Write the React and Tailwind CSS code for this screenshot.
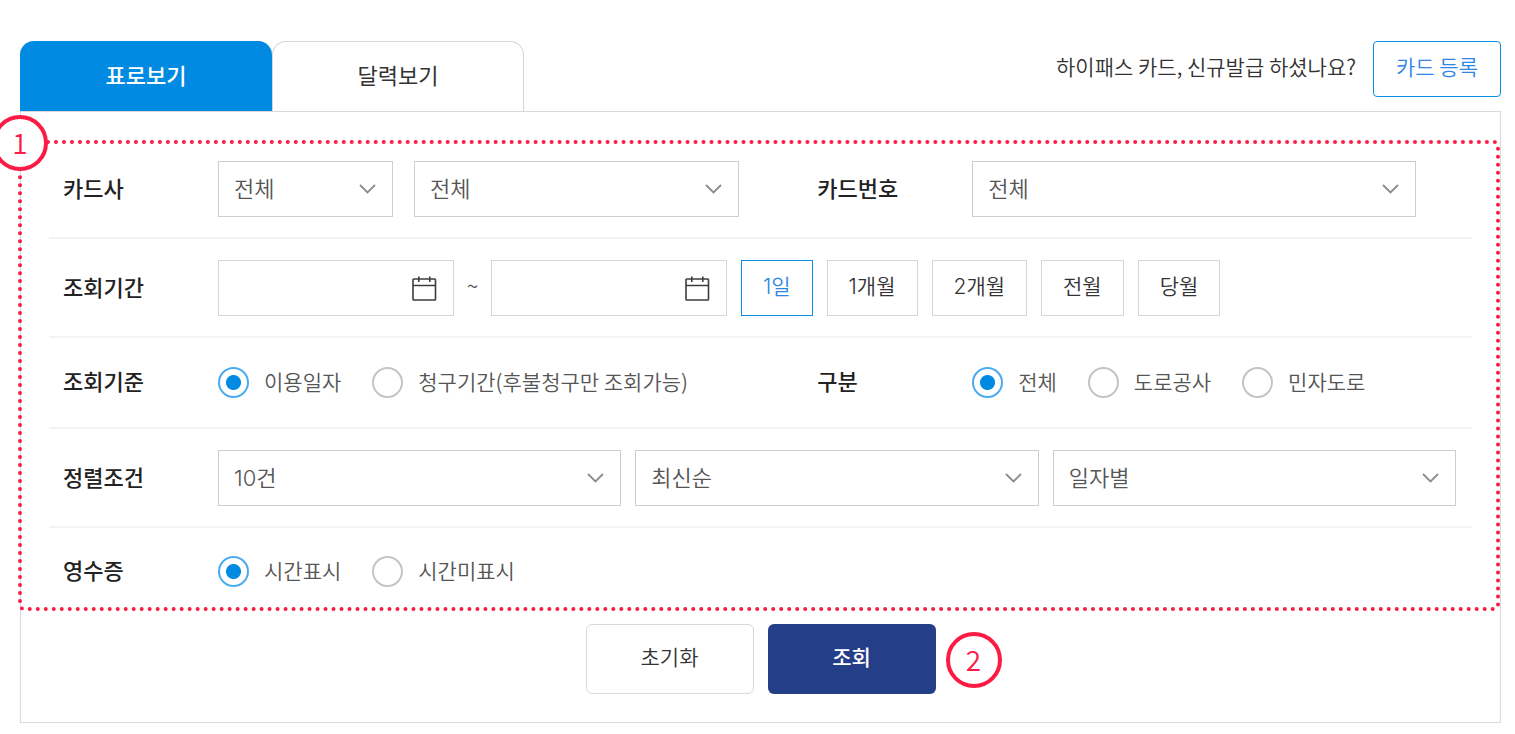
import React, { useState } from 'react';
import clsx from 'clsx';

const TABS = ['표로보기', '달력보기'];
const PERIODS = ['1일', '1개월', '2개월', '전월', '당월'];

const ChevronIcon = () => (
  <svg
    className="pointer-events-none absolute right-4 top-1/2 h-[18px] w-[18px] -translate-y-1/2"
    viewBox="0 0 18 18"
    fill="none"
    stroke="#8c8c8c"
    strokeWidth="1.8"
    aria-hidden="true"
  >
    <path d="M1 5 L8.5 12.5 L16 5" />
  </svg>
);

const CalendarIcon = () => (
  <svg
    className="pointer-events-none absolute right-4 top-1/2 h-[26px] w-[26px] -translate-y-1/2"
    viewBox="0 0 26 26"
    fill="none"
    stroke="#3c3c3c"
    strokeWidth="1.6"
    aria-hidden="true"
  >
    <rect x="1" y="4" width="22.5" height="21" rx="0.8" />
    <path d="M1 10.5 H23.5 M6.8 1.5 V7 M17.8 1.5 V7" />
  </svg>
);

const SelectBox = ({ id, label, options, className }) => (
  <div className={clsx('relative', className)}>
    <select
      id={id}
      aria-label={label}
      className="h-14 w-full appearance-none border border-[#cecece] bg-white pb-1 pl-[15px] pr-10 text-[22px] text-[#555555]"
    >
      {options.map((option) => (
        <option key={option}>{option}</option>
      ))}
    </select>
    <ChevronIcon />
  </div>
);

const DateBox = ({ id, label }) => (
  <div className="relative w-[236px]">
    <input
      id={id}
      type="text"
      aria-label={label}
      className="h-14 w-full border border-[#d6d6d6] bg-white pl-[15px] pr-12 text-[22px] text-[#555555]"
    />
    <CalendarIcon />
  </div>
);

const RadioGroup = ({ name, options }) => {
  const [value, setValue] = useState(options[0]);

  return (
    <div className="flex items-center gap-[31px]" role="radiogroup" aria-label={name}>
      {options.map((option) => (
        <label key={option} className="flex items-center gap-[15px] text-[21px] leading-[27px] text-[#555555]">
          <input
            type="radio"
            name={name}
            checked={value === option}
            onChange={() => setValue(option)}
            className="h-[31px] w-[31px] appearance-none rounded-full border-2 border-[#c4c4c4] bg-white checked:border-[#4aacef] checked:bg-[radial-gradient(circle,#008ae2_0,#008ae2_7px,transparent_8px)]"
          />
          <span className="pb-0.5">{option}</span>
        </label>
      ))}
    </div>
  );
};

const RowLabel = ({ htmlFor, children }) => (
  <label htmlFor={htmlFor} className="w-[155px] shrink-0 pb-1 text-[22px] font-medium leading-[27px] text-[#222222]">
    {children}
  </label>
);

const Badge = ({ children, className }) => (
  <span
    className={clsx(
      'flex h-14 w-14 items-center justify-center rounded-full border-4 border-[#fb1b44] bg-white pb-0.5 text-[28px] leading-none text-[#fb1b44]',
      className
    )}
  >
    {children}
  </span>
);

const App = () => {
  const [tab, setTab] = useState(TABS[0]);
  const [period, setPeriod] = useState(PERIODS[0]);

  return (
    <main className="min-h-screen bg-white pb-[11px] pl-5 pr-[14px] pt-[41px] font-['Noto_Sans_CJK_KR',sans-serif] font-[350]">
      {/* Tabs */}
      <header className="flex items-start justify-between">
        <div className="flex" role="tablist">
          {TABS.map((name) => (
            <button
              key={name}
              type="button"
              role="tab"
              aria-selected={tab === name}
              onClick={() => setTab(name)}
              className={clsx(
                'h-[70px] w-[252px] rounded-t-[14px] pb-1 text-[22px]',
                tab === name
                  ? 'bg-[#008ae2] font-medium text-white'
                  : 'border border-b-0 border-[#d6d6d6] bg-white font-normal text-[#333333]'
              )}
            >
              {name}
            </button>
          ))}
        </div>
        <div className="flex items-center gap-[17px]">
          <p className="pb-1 text-[21px] text-[#333333]">하이패스 카드, 신규발급 하셨나요?</p>
          <button
            type="button"
            className="h-14 rounded border border-[#0a8fe6] bg-white px-[22px] pb-1 text-[21px] text-[#2f86e4]"
          >
            카드 등록
          </button>
        </div>
      </header>

      <form className="border border-[#d9d9d9] pb-7 pt-7" onSubmit={(e) => e.preventDefault()}>
        <div className="relative px-7">
          {/* Card */}
          <div className="grid grid-cols-[53fr_47fr] border-b-2 border-[#f3f3f3] pb-5 pt-[21px]">
            <div className="flex items-center pl-[14px] pr-16">
              <RowLabel htmlFor="company">카드사</RowLabel>
              <div className="flex flex-1 gap-[21px]">
                <SelectBox id="company" options={['전체']} className="w-[175px]" />
                <SelectBox label="카드 종류" options={['전체']} className="flex-1" />
              </div>
            </div>
            <div className="flex items-center pl-[14px] pr-14">
              <RowLabel htmlFor="number">카드번호</RowLabel>
              <SelectBox id="number" options={['전체']} className="flex-1" />
            </div>
          </div>

          {/* Period */}
          <div className="flex items-center border-b-2 border-[#f3f3f3] pb-5 pl-[14px] pt-[21px]">
            <RowLabel htmlFor="start">조회기간</RowLabel>
            <div className="flex items-center gap-[14px]">
              <div className="flex items-center">
                <DateBox id="start" label="시작일" />
                <span className="w-[37px] pb-1 text-center text-[21px] text-[#555555]">~</span>
                <DateBox label="종료일" />
              </div>
              {PERIODS.map((name) => (
                <button
                  key={name}
                  type="button"
                  onClick={() => setPeriod(name)}
                  className={clsx(
                    "h-14 border bg-white px-[21px] pb-0.5 font-['Inter','Noto_Sans_CJK_KR',sans-serif] text-[21px]",
                    period === name ? 'border-[#0a8fe6] text-[#2f86e4]' : 'border-[#d6d6d6] text-[#333333]'
                  )}
                >
                  {name}
                </button>
              ))}
            </div>
          </div>

          {/* Criteria */}
          <div className="grid grid-cols-[53fr_47fr] border-b-2 border-[#f3f3f3] py-[29px]">
            <div className="flex items-center pl-[14px]">
              <RowLabel>조회기준</RowLabel>
              <RadioGroup name="조회기준" options={['이용일자', '청구기간(후불청구만 조회가능)']} />
            </div>
            <div className="flex items-center pl-[14px]">
              <RowLabel>구분</RowLabel>
              <RadioGroup name="구분" options={['전체', '도로공사', '민자도로']} />
            </div>
          </div>

          {/* Sort */}
          <div className="flex items-center border-b-2 border-[#f3f3f3] pb-5 pl-[14px] pr-4 pt-[21px]">
            <RowLabel htmlFor="count">정렬조건</RowLabel>
            <div className="flex flex-1 gap-[14px]">
              <SelectBox
                id="count"
                options={['10건']}
                className="flex-1 font-['Inter','Noto_Sans_CJK_KR',sans-serif] [&>select]:pb-0"
              />
              <SelectBox label="정렬 순서" options={['최신순']} className="flex-1" />
              <SelectBox label="정렬 단위" options={['일자별']} className="flex-1" />
            </div>
          </div>

          {/* Receipt */}
          <div className="flex items-center pb-6 pl-[14px] pt-7">
            <RowLabel>영수증</RowLabel>
            <RadioGroup name="영수증" options={['시간표시', '시간미표시']} />
          </div>

          {/* Step 1 outline */}
          <div className="pointer-events-none absolute -left-[3px] bottom-0 right-0 top-0 rounded-md border-4 border-dotted border-[#fb1b44]" />
          <Badge className="absolute -left-[29px] -top-[25px]">1</Badge>
        </div>

        <div className="mt-[13px] flex justify-center gap-[14px]">
          <button
            type="button"
            className="h-[70px] w-[168px] rounded-md border border-[#d9d9d9] bg-white pb-1 text-[21px] text-[#333333]"
          >
            초기화
          </button>
          <div className="relative">
            <button
              type="submit"
              className="h-[70px] w-[168px] rounded-md bg-[#253e88] pb-1 text-[21px] font-medium text-white"
            >
              조회
            </button>
            <Badge className="absolute left-[178px] top-2">2</Badge>
          </div>
        </div>
      </form>
    </main>
  );
};

export default App;
